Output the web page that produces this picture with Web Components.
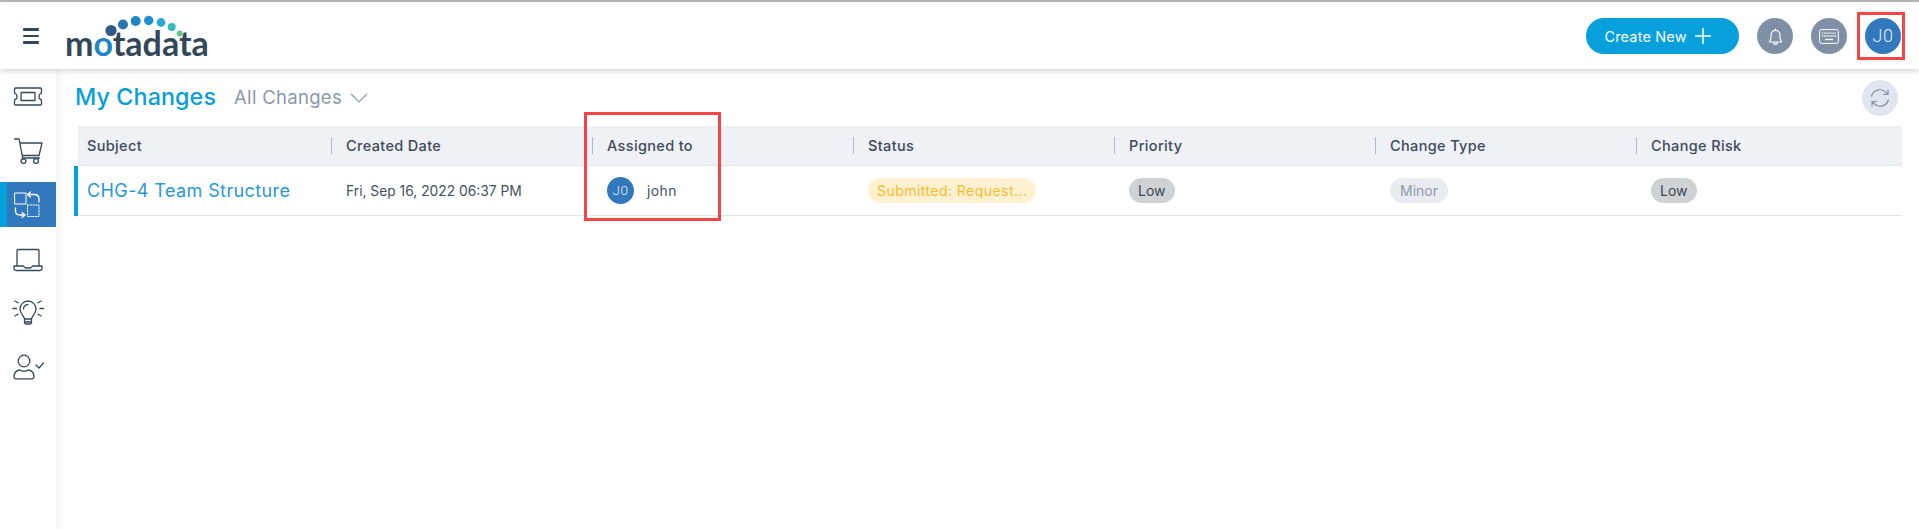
<!DOCTYPE html>
<html><head><meta charset="utf-8"><title>My Changes</title>
<style>html,body{margin:0;height:100%;background:#fff;overflow:hidden}body{font-family:Inter,"Open Sans",sans-serif}</style>
</head><body>
<app-shell>
  <top-bar slot="top"></top-bar>
  <side-nav slot="side"></side-nav>
  <page-head></page-head>
  <change-table></change-table>
</app-shell>
<script>
const def=(n,html)=>customElements.define(n,class extends HTMLElement{constructor(){super();this.attachShadow({mode:'open'}).innerHTML=html;}});

def('app-shell',`<style>
:host{display:grid;grid-template-columns:56px 1fr;grid-template-rows:67px 460px;height:529px;position:relative;border-top:2px solid #bcbcbc;box-sizing:border-box}
.t{grid-column:1/3;position:relative;z-index:3;box-shadow:0 1px 7px rgba(60,70,90,.28);background:#fff}
.s{position:relative;z-index:2;box-shadow:2px 0 8px rgba(60,70,90,.10);background:#fff}
.m{padding:0 16px 0 18px;display:flex;flex-direction:column;min-width:0}
.box{position:absolute;border:3px solid #f44545;box-sizing:border-box;z-index:5;pointer-events:none}
.a{left:584px;top:110px;width:137px;height:109px}
.b{left:1857px;top:10px;width:48px;height:48px}
</style>
<div class="t"><slot name="top"></slot></div><div class="s"><slot name="side"></slot></div><div class="m"><slot></slot></div>
<div class="box a"></div><div class="box b"></div>`);

def('brand-logo',`<style>
:host{display:block;position:relative;width:144px;height:50px;margin-left:26px}
.w{position:absolute;left:0;bottom:1.500px;font:700 34px/34px Lato,"Open Sans",sans-serif;color:#33475b;letter-spacing:0;white-space:nowrap}
.w b{font-weight:700;color:#1f86c4}
svg{position:absolute;left:-65px;top:-11px;overflow:visible}
</style><span class="w">m<b>o</b>tadata</span>
<svg width="220" height="60" viewBox="0 0 220 60"><circle cx="111" cy="30.500" r="5.600" fill="#2f5a85"/><circle cx="123" cy="24.500" r="5" fill="#2a72b0"/><circle cx="135.700" cy="21" r="5" fill="#1f85c8"/><circle cx="148.700" cy="20.500" r="4.700" fill="#1e90cd"/><circle cx="161" cy="22.500" r="4.400" fill="#2ba8d8"/><circle cx="171.700" cy="27" r="4" fill="#33bcc0"/><circle cx="179.700" cy="33.500" r="3" fill="#5cc88a"/></svg>`);

def('round-btn',`<style>
:host{display:flex;width:36px;height:36px;border-radius:50%;background:var(--bg,#7f90a6);align-items:center;justify-content:center;color:#fff;flex:none}
</style><slot></slot>`);

def('user-avatar',`<style>
:host{display:inline-flex;width:var(--d,36px);height:var(--d,36px);border-radius:50%;background:#3278bc;color:#e6eff8;align-items:center;justify-content:center;font:300 var(--f,18px)/1 Roboto,sans-serif;flex:none;letter-spacing:.6px}
</style><slot></slot>`);

def('top-bar',`<style>
:host{display:flex;align-items:center;height:67px;box-sizing:border-box;padding:1px 18px 0 23px}
.burger{display:flex;flex-direction:column;gap:4px;width:16px}.burger i{display:block;height:2.400px;background:#33475b;border-radius:1px}
.sp{flex:1}
.create{display:flex;align-items:center;box-sizing:border-box;width:153px;height:36px;border-radius:18px;background:#06a0dd;color:#fff;font:400 14.500px Inter,sans-serif;letter-spacing:.15px;padding-left:18.500px;white-space:nowrap;margin-right:18px}
.create svg{margin-left:8px}
.r{display:flex;gap:18px;align-items:center}
</style>
<div class="burger"><i></i><i></i><i></i></div>
<brand-logo></brand-logo>
<div class="sp"></div>
<div class="create">Create New<svg width="16" height="16" viewBox="0 0 16 16"><path d="M8 0v16M0 8h16" stroke="#fff" stroke-width="1.600"/></svg></div>
<div class="r">
<round-btn><svg width="17" height="19" viewBox="0 0 20 22" fill="none" stroke="#fff" stroke-width="1.300"><path d="M10 1.500v1.500M3 16.500c1.200-1.200 1.800-2.300 1.800-5V9a5.200 5.200 0 0 1 10.400 0v2.500c0 2.700.6 3.800 1.800 5 .4.500.2 1-.4 1H3.400c-.6 0-.8-.5-.4-1zM7.800 18c0 1.500 1 2.300 2.200 2.300s2.200-.8 2.200-2.300"/></svg></round-btn>
<round-btn><svg width="20" height="15" viewBox="0 0 20 15" fill="none" stroke="#fff"><rect x=".6" y=".6" width="18.800" height="13.800" rx="2" stroke-width="1"/><path d="M3 4.200h14M3 7h14" stroke-width="1.300" stroke-dasharray="1.300 .8"/><path d="M6 10.500h8" stroke-width="1.300"/></svg></round-btn>
<user-avatar>J0</user-avatar>
</div>`);

const ic=(s)=>`<svg width="32" height="32" viewBox="0 0 32 32" fill="none" stroke="currentColor" stroke-width="1.300" stroke-linecap="round" stroke-linejoin="round">${s}</svg>`;
def('nav-item',`<style>
:host{display:flex;align-items:center;justify-content:center;height:45px;color:#35475b;box-sizing:border-box}
:host([active]){background:#3278bc;border-left:7px solid #06a0dd;color:#fff;padding-right:7px}
</style><slot></slot>`);

def('side-nav',`<style>
:host{display:flex;flex-direction:column;padding-top:5.500px}
nav-item:nth-of-type(2){margin-top:9px}
nav-item:nth-of-type(3){margin-top:8.500px}
nav-item:nth-of-type(4){margin-top:10.500px}
nav-item:nth-of-type(5){margin-top:7px}
nav-item:nth-of-type(6){margin-top:10px}
</style>
<nav-item>${ic('<path d="M3.500 7h25a1 1 0 0 1 1 1v3.500a1 1 0 0 1-.6.900 3.400 3.400 0 0 0 0 6.200 1 1 0 0 1 .6.900V23a1 1 0 0 1-1 1h-25a1 1 0 0 1-1-1v-3.500a1 1 0 0 1 .6-.9 3.400 3.400 0 0 0 0-6.200 1 1 0 0 1-.6-.9V8a1 1 0 0 1 1-1z"/><rect x="9" y="11.500" width="14" height="8"/>')}</nav-item>
<nav-item>${ic('<path d="M2.500 4h4.500l4 20.500M8 8h22l-3 12.500H10.500"/><path d="M10.500 23h17"/><circle cx="11.500" cy="26" r="2.400"/><circle cx="24" cy="26" r="2.400"/>')}</nav-item>
<nav-item active>${ic('<rect x="3" y="4" width="11" height="11" stroke-width="1"/><path d="M15.500 5.500h7c3 0 4.500 1.500 4.500 4.500v3M15.500 5.500l3-2.500M15.500 5.500l3 2.500M3.500 19v3c0 3 1.500 4 4.500 4h5M13 26l-3-2.500M13 26l-3 2.500"/><rect x="15.500" y="16" width="11.500" height="11.500" stroke-width="1" stroke-dasharray="1.400 1.400"/>')}</nav-item>
<nav-item>${ic('<path d="M5 21.500V7a1.500 1.500 0 0 1 1.500-1.500h19A1.500 1.500 0 0 1 27 7v14.500"/><path d="M2 22h9.500c.8 1.800 1.500 2 2.500 2h4c1 0 1.700-.2 2.500-2H30v2c0 1.600-1 2.500-2.500 2.500h-23C3 26.500 2 25.600 2 24z"/>')}</nav-item>
<nav-item>${ic('<path d="M12.500 23c0-3-4.500-5-4.500-10a8 8 0 0 1 16 0c0 5-4.500 7-4.500 10zM12.500 23v3.500c0 .8.500 1.500 1.500 1.500h4c1 0 1.500-.7 1.500-1.500V23M12.500 26h7M11.500 13a4.500 4.500 0 0 1 4.500-4.500M1 12.500h3.500M28 12.500h3.500M3 5l3 1.800M29 5l-3 1.800M3 20l3-1.800M29 20l-3-1.800"/>')}</nav-item>
<nav-item>${ic('<circle cx="12" cy="10" r="5.800"/><path d="M2 26c0-4 2.500-6.500 5.500-7 2 1.500 7 1.500 9 0 3 .5 5.500 3 5.500 7 0 1.200-.6 1.800-1.800 1.800H3.800C2.600 27.800 2 27.200 2 26zM24 14l3 3 4.500-5"/>')}</nav-item>`);

def('page-head',`<style>
:host{display:flex;align-items:center;height:57px;box-sizing:border-box;padding:0 5px 0 1px;flex:none}
.l{display:flex;align-items:center;padding-bottom:3px}
.t{font:500 23.300px Inter,sans-serif;color:#099dd9;letter-spacing:.1px}
.v{font:400 18.500px Inter,sans-serif;color:#8a98ab;margin-left:18px;letter-spacing:.3px;padding-top:1px}
svg.c{margin-left:8px;margin-top:3px}
.sp{flex:1}
</style><div class="l"><span class="t">My Changes</span><span class="v">All Changes</span>
<svg class="c" width="18" height="10" viewBox="0 0 18 10" fill="none" stroke="#8a98ab" stroke-width="1.200"><path d="M1 1l8 8 8-8"/></svg></div>
<div class="sp"></div>
<round-btn style="--bg:#e0e6ef"><svg width="20" height="20" viewBox="0 0 20 20" fill="none" stroke="#8492a6" stroke-width="1.200"><path d="M1.500 8.500A8.500 8.500 0 0 1 16 4.500L18 6.500M18 1.500v5h-5M18.500 11.500A8.500 8.500 0 0 1 4 15.500L2 13.500M2 18.500v-5h5"/></svg></round-btn>`);

def('pill-tag',`<style>
:host{display:inline-flex;align-items:center;height:25px;border-radius:13px;padding:0 9px;font:400 14px Inter,sans-serif;white-space:nowrap;background:var(--bg,#cfd2d5);color:var(--fg,#3c4654);box-sizing:border-box;letter-spacing:var(--ls,0)}
</style><slot></slot>`);

def('change-table',`<style>
:host{display:block;margin:0 1px 0 4px;position:relative}
.g{display:grid;grid-template-columns:253px repeat(5,261px) 1fr}
.h{background:#eef1f6;height:40px;border-bottom:1px solid #e1e5ec;box-sizing:border-box}
.hc{display:flex;align-items:center;font:500 14.500px Inter,sans-serif;letter-spacing:.35px;color:#3e4a5c;padding-left:15px;position:relative}
.hc:first-of-type{padding-left:9px}
.hc:not(:first-of-type)::before{content:"";position:absolute;left:0;top:11px;height:17px;width:1px;background:#aebbcd}
.r{height:50px;border-bottom:1px solid #e3e6ec;box-sizing:border-box;position:relative}
.r::before{content:"";position:absolute;left:-4px;top:0;bottom:-1px;width:4px;background:#06a0dd}
.c{display:flex;align-items:center;padding-left:15px;font:400 13.800px Inter,sans-serif;color:#454f5e;white-space:nowrap}
.c:first-child{padding-left:9px;font:400 18px Inter,sans-serif;color:#2a97d6;letter-spacing:.4px}
.u{gap:13px;--d:27px;--f:13.500px}
.u span{letter-spacing:.5px}
.s{--bg:#fdf1d0;--fg:#fbb92f;--ls:.45px}
.mi{--bg:#e8ebef;--fg:#8f9aa8;padding:0 10px}
</style>
<div class="g h"><div class="hc">Subject</div><div class="hc">Created Date</div><div class="hc">Assigned to</div><div class="hc">Status</div><div class="hc">Priority</div><div class="hc">Change Type</div><div class="hc">Change Risk</div></div>
<div class="g r"><div class="c">CHG-4 Team Structure</div><div class="c">Fri, Sep 16, 2022 06:37 PM</div><div class="c u"><user-avatar>J0</user-avatar><span>john</span></div><div class="c"><pill-tag class="s">Submitted: Request...</pill-tag></div><div class="c"><pill-tag>Low</pill-tag></div><div class="c"><pill-tag class="mi">Minor</pill-tag></div><div class="c"><pill-tag>Low</pill-tag></div></div>`);
</script>
</body></html>
